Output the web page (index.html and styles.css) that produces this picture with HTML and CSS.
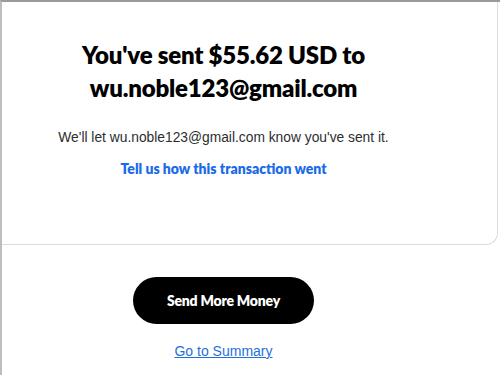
FILE: index.html
```html
<!DOCTYPE html>
<html>
<head>
<meta charset="utf-8">
<link rel="stylesheet" href="styles.css">
</head>
<body>
<div class="frame">
  <section class="card">
    <div class="content">
      <h1 class="title">You've sent $55.62 USD to<br>wu.noble123@gmail.com</h1>
      <p class="note">We'll let wu.noble123@gmail.com know you've sent it.</p>
      <a class="feedback" href="#">Tell us how this transaction went</a>
    </div>
  </section>
  <div class="actions">
    <a class="btn" href="#">Send More Money</a>
    <a class="summary" href="#">Go to Summary</a>
  </div>
</div>
</body>
</html>
```

FILE: styles.css
```css
html, body {
  margin: 0;
  padding: 0;
  background: #fff;
}
.frame {
  box-sizing: border-box;
  width: 500px;
  height: 375px;
  border-top: 2px solid #9a9a9a;
  border-left: 2px solid #bdbdbd;
  overflow: hidden;
}
.card {
  box-sizing: border-box;
  width: 496px;
  height: 243px;
  border-right: 1px solid #dcdcdc;
  border-bottom: 1px solid #dcdcdc;
  border-bottom-right-radius: 12px;
}
.content {
  width: 443px;
  padding-top: 36px;
  display: flex;
  flex-direction: column;
  align-items: center;
  text-align: center;
}
.title {
  margin: 0;
  font-family: Lato, "Open Sans", sans-serif;
  font-weight: 800;
  font-size: 24px;
  line-height: 33px;
  color: #000;
  letter-spacing: -0.2px;
}
.note {
  margin: 25px 0 0;
  font-family: "Liberation Sans", Arial, sans-serif;
  font-size: 13.8px;
  line-height: 18px;
  color: #2c2e2f;
}
.feedback {
  margin-top: 13px;
  font-family: Lato, sans-serif;
  font-weight: 800;
  font-size: 14px;
  line-height: 18px;
  color: #1a6be8;
  text-decoration: none;
}
.actions {
  width: 443px;
  display: flex;
  flex-direction: column;
  align-items: center;
  padding-top: 32px;
}
.btn {
  display: flex;
  align-items: center;
  justify-content: center;
  width: 181px;
  height: 47px;
  border-radius: 24px;
  background: #000;
  color: #fff;
  font-family: Lato, sans-serif;
  font-weight: 800;
  font-size: 14px;
  text-decoration: none;
  letter-spacing: -0.2px;
}
.summary {
  margin-top: 18px;
  font-family: "Liberation Sans", Arial, sans-serif;
  font-size: 14px;
  line-height: 18px;
  color: #1f6fdc;
  text-decoration: underline;
}
```
